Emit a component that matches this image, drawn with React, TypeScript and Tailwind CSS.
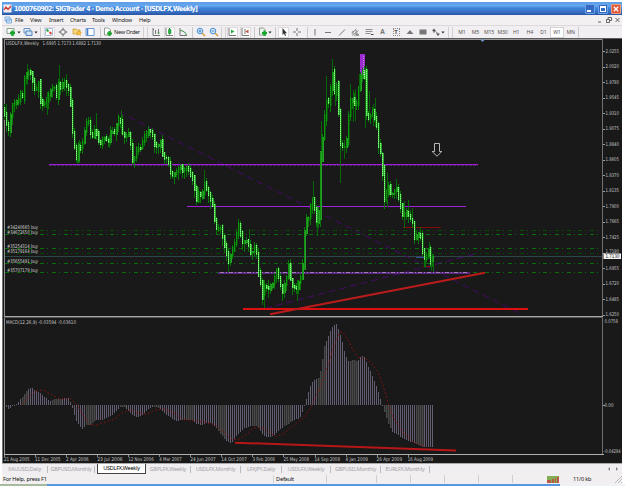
import React from "react";

type Pt = [number, number];

// Closing price path of the weekly chart, in chart pixels.
const PRICE: Pt[] = [
  [4, 108], [6.5, 121], [9, 132], [12, 107], [15, 102], [19, 100], [21.5, 92], [23, 98], [24.5, 79], [28, 71.5],
  [31.5, 73], [36, 93], [39, 80], [41.5, 105], [47, 101], [50.5, 90], [55, 86.5], [57, 98], [59.5, 80], [62, 92],
  [64, 78], [68.5, 88], [70.3, 90], [71.5, 110], [73, 131], [75, 146], [77, 160], [79.5, 143], [82, 151], [84, 135],
  [88.5, 117], [92, 139], [96, 127], [100, 146], [104, 137], [109, 141], [112, 127], [114.5, 136], [116.5, 126],
  [120, 115], [123.5, 136], [129.5, 133], [131, 143], [133.5, 163], [137.5, 147], [141.5, 148], [144, 137],
  [149.5, 129], [153.5, 135], [155.5, 146], [159.5, 146], [161.5, 139], [163.5, 157], [168, 158], [171, 172],
  [173.5, 176], [177, 171], [181, 166], [183.5, 171], [187.5, 167], [193, 177], [195, 187], [197, 201], [199, 192],
  [202, 198], [205, 182], [207, 188], [210, 197], [213, 205], [215, 218], [217, 229], [221, 227], [224, 240],
  [227, 253], [228.5, 263], [232, 252], [235, 243], [239, 224], [243, 242], [248, 240], [252, 256], [255, 245],
  [258, 257], [259.5, 278], [262, 285], [263.5, 300], [265.5, 281], [268, 290], [273, 284], [277, 269], [280, 280],
  [283, 292], [287, 277], [289, 264], [292, 285], [297, 288], [301, 278], [303, 267], [305, 233], [307, 218],
  [310, 217], [312, 197], [314, 200], [317, 222], [319, 217], [320.5, 180], [321.5, 140], [324, 137], [326.5, 92],
  [328, 112], [330.5, 93], [333, 70], [335, 93], [337, 83], [339, 110], [341, 143], [344, 148], [347, 143],
  [348.5, 120], [351, 100], [354, 98], [356, 110], [359, 90], [361.5, 73], [365, 70], [366.3, 113], [370, 118],
  [373, 110], [377, 123], [380, 155], [382.5, 150], [383.6, 187], [385.5, 202], [388.5, 183], [390.5, 193],
  [394.5, 193], [396.5, 185], [400, 200], [401.5, 208], [404, 218], [406.5, 210], [410, 217], [413.5, 222],
  [414.7, 238], [418.5, 233], [421, 235], [424, 257], [426.5, 258], [429, 248], [431.5, 264], [433.5, 256],
];

// Long shadows: x, top, bottom.
const WICKS: [number, number, number][] = [
  [6, 104, 132], [27.5, 64, 85], [47.5, 92, 115], [59.5, 65, 100], [66, 74, 96], [96, 113, 140], [121, 110, 134],
  [79, 140, 163], [109, 135, 148], [77, 150, 164], [204.5, 170, 192], [228, 255, 272], [249.5, 229, 248],
  [264.5, 285, 308], [297.5, 280, 301], [268, 280, 298], [313.5, 181, 205], [317.5, 208, 236], [321, 121, 150],
  [326.5, 76, 110], [332.5, 59, 96], [340.5, 111, 183], [344.5, 140, 159], [350.5, 84, 120], [353, 90, 122],
  [355.5, 89, 121], [359.5, 74, 103], [365.5, 68, 128], [369.5, 91, 120], [375.5, 98, 127], [387.5, 173, 207],
  [373, 104, 126], [396.5, 179, 199], [404.5, 201, 228], [408.5, 200, 220], [412.5, 208, 223], [429.5, 242, 259],
  [431.5, 254, 271], [433.5, 254, 272], [420, 227, 240], [425, 248, 268], [335.5, 78, 106],
];

const MACD: Pt[] = [
  [6, 407], [9, 409], [12.5, 406], [16, 404], [20, 400], [24, 395], [28, 389], [31.5, 387], [36, 391], [40, 392],
  [45, 397], [50, 401], [55, 398.5], [60, 399.5], [65, 398], [69, 398.5], [71, 403], [73, 410], [76, 420], [80, 426],
  [83, 429], [86, 425.5], [90, 425], [95, 420], [100, 420.5], [107, 418], [112, 415], [117, 410], [119.5, 407.5],
  [124, 407], [128, 410], [133, 415.5], [137, 417.5], [142, 415], [147, 410], [152, 407], [157, 407], [162, 410],
  [167, 415], [172, 418.5], [177, 421], [183, 419.5], [192, 419.5], [197, 424], [202, 425], [207, 422.5],
  [213, 424], [218, 430], [223, 437], [228, 442], [232, 443], [237, 435], [243, 429], [250, 426.5], [257, 426],
  [263, 435], [268, 437.5], [273, 436], [280, 429], [287, 425], [293, 420.5], [300, 418], [304, 408], [306, 400.5],
  [309, 390], [312, 382], [315, 379], [319, 378], [322, 363], [324, 347], [327, 340], [330, 332], [333, 326],
  [336.5, 324], [339, 330], [342, 340], [345, 353], [348, 361.5], [353, 360], [358, 361.5], [360, 357], [364, 356],
  [367, 363], [372, 375], [377, 387], [380, 397], [382, 403], [384, 410], [388, 423], [392, 431.5], [397, 434],
  [402, 438], [408, 441], [414, 442.5], [418, 445], [424, 447], [429, 447.5], [434, 446.5],
];

const SIGNAL: Pt[] = [
  [21.5, 404], [28, 398], [35, 391], [43, 390], [50, 394], [60, 399], [70, 398.5], [77, 405], [83, 415], [90, 425],
  [97, 425], [107, 421.5], [115, 419], [123, 412.5], [130, 410], [137, 413], [147, 414], [155, 410], [165, 409],
  [173, 412.5], [182, 419], [192, 420.5], [202, 422], [214, 424.5], [223, 431.5], [230, 438], [237, 440],
  [245, 436], [253, 428], [263, 427.5], [270, 432.5], [275, 436.5], [283, 434], [292, 427], [305, 416.5],
  [312, 405], [320, 388], [328, 365], [335, 343], [340, 332], [343, 332.5], [348, 340], [353, 350], [358, 357.5],
  [365, 358.5], [372, 363.5], [378, 372], [383, 385], [388, 403], [393, 417], [400, 428], [407, 437], [413, 441.5],
  [420, 444.5], [427, 446.5],
];

function at(points: Pt[], x: number): number {
  if (x <= points[0][0]) return points[0][1];
  for (let i = 1; i < points.length; i++) {
    if (x <= points[i][0]) {
      const [x0, y0] = points[i - 1];
      const [x1, y1] = points[i];
      return y0 + ((y1 - y0) * (x - x0)) / (x1 - x0);
    }
  }
  return points[points.length - 1][1];
}

const noise = (n: number) => {
  const v = Math.sin(n * 127.1 + 11.7) * 43758.5453;
  return v - Math.floor(v);
};

const steps = Array.from({ length: 215 }, (_, i) => 4 + i * 2);

const SCALE = [
  "2.0255", "2.0020", "1.9780", "1.9545", "1.9310", "1.9075", "1.8840", "1.8605", "1.8370",
  "1.8135", "1.7900", "1.7665", "1.7425", "1.7190", "1.6955", "1.6720", "1.6485", "1.6250",
];

const DATES = [
  "21 Aug 2005", "11 Dec 2005", "2 Apr 2006", "23 Jul 2006", "12 Nov 2006", "4 Mar 2007", "24 Jun 2007",
  "14 Oct 2007", "3 Feb 2008", "25 May 2008", "14 Sep 2008", "4 Jan 2009", "26 Apr 2009", "16 Aug 2009",
];

const ORDERS: [string, number, number, string][] = [
  ["#34240665 buy", 229, 230.5, "#054d05"],
  ["#34672650 buy", 233.5, 234.5, "#087008"],
  ["#35254314 buy", 247.7, 248.5, "#087008"],
  ["#35179164 buy", 253, 253.5, "#054205"],
  ["#35655491 buy", 263, 263.5, "#087008"],
  ["#35707179 buy", 271.7, 272.5, "#087008"],
];

function Label({ x, y, w, children, fill = "#c4c4c4" }: { x: number; y: number; w: number; children: string; fill?: string }) {
  return (
    <text x={x} y={y} textLength={w} lengthAdjust="spacingAndGlyphs" fill={fill} className="text-[5px] font-['DejaVu_Sans',sans-serif]">
      {children}
    </text>
  );
}

function Chart() {
  return (
    <svg viewBox="2 38 620 426" className="block h-[426px] w-[620px] shrink-0 bg-[#191919]">
      <g shapeRendering="crispEdges">
        <rect x="2" y="38" width="620" height="1" fill="#5c5c5c" />
        <rect x="4" y="39" width="599" height="1" fill="#969696" />
        <rect x="2" y="38" width="1" height="426" fill="#777" />
        <rect x="4" y="39" width="1" height="416" fill="#929292" />
        <rect x="602" y="39" width="1" height="416" fill="#707070" />
        <rect x="4" y="316" width="599" height="1" fill="#a8a8a8" />
        <rect x="4" y="317" width="599" height="1" fill="#555" />
        <rect x="4" y="454" width="600" height="1" fill="#b0b0b0" />
        <rect x="2" y="463" width="620" height="1" fill="#aaa" />
      </g>
      <path d="M480 39.500h5l-2.500 2.500z" fill="#6f97cc" />

      {/* open orders */}
      {ORDERS.map(([name, ty, ly, c]) => (
        <g key={name}>
          <path d={`M5 ${ly}H602`} stroke={c} strokeDasharray="4 3 1 3.700" shapeRendering="crispEdges" />
          <Label x={7} y={ty} w={31} fill="#d0d4d0">{name}</Label>
        </g>
      ))}
      <path d="M5 256.500H602" stroke="#2d4747" shapeRendering="crispEdges" />

      {/* dashed trend guides */}
      <path d="M119 112L519 313" stroke="#45086a" strokeWidth="0.900" strokeDasharray="7 4" />
      <path d="M265 308.500L475 254" stroke="#4a0970" strokeWidth="0.900" strokeDasharray="7 4" />

      {/* horizontal levels */}
      <g shapeRendering="crispEdges">
        <path d="M49 164.500H478" stroke="#a41cdb" />
        <path d="M49 165.500H478" stroke="#4c2a63" strokeDasharray="3 1" />
        <path d="M187 206.500H466" stroke="#a020dc" />
        <path d="M218 272.500H470" stroke="#5c2882" strokeWidth="2" />
        <path d="M220 272.500H469" stroke="#9a80ae" strokeDasharray="4 2 1 2" />
        <path d="M403 227.500H441" stroke="#850b0b" />
        <path d="M416 257.500H424" stroke="#324f91" />
        <path d="M423 266.500H430" stroke="#850b0b" />
        <rect x="360" y="54" width="5" height="24" fill="#9b2bd0" />
      </g>

      {/* candles */}
      <g shapeRendering="crispEdges">
        {WICKS.map(([x, a, b], i) => (
          <rect key={i} x={Math.floor(x)} y={a} width="1" height={b - a} fill="#056805" />
        ))}
        {steps.map((x, i) => {
          const open = at(PRICE, x - 1);
          const close = at(PRICE, x + 1.2);
          const top = Math.round(Math.min(open, close) - noise(i) * 2);
          const bottom = Math.round(Math.max(open, close) + 1 + noise(i + 300) * 2);
          const bear = close > open + 0.4;
          const wide = noise(i + 700) > 0.6;
          return (
            <g key={x}>
              <rect x={x} y={top - Math.round(noise(i + 50) * 4)} width="1" height={bottom - top + Math.round(3 + noise(i + 90) * 5)} fill="#067606" />
              <rect x={x + 1} y={top} width="1" height={bottom - top} fill={wide ? "#2a9c2a" : bear ? "#0c560c" : "#075007"} />
              <rect x={x} y={top} width="1" height={bottom - top} fill={bear ? "#48d848" : "#088a08"} />
              <path
                d={`M${x + 0.5} ${top}V${bottom}`}
                stroke={bear ? "#8cff8c" : "#12a012"}
                strokeDasharray="1 1"
              />
            </g>
          );
        })}
        <path d="M363.500 56V76" stroke="#bd88d8" strokeDasharray="1 1" />
      </g>

      {/* MACD histogram and signal */}
      <g shapeRendering="crispEdges">
        {steps.slice(1).map((x) => {
          const v = Math.round(at(MACD, x + 0.5));
          const y = Math.min(v, 405);
          const gray =
            (x > 20 && x < 28) || (x > 51 && x < 62) || (x > 85 && x < 95) || (x > 118 && x < 126) ||
            (x > 152 && x < 160) || (x > 184 && x < 194) || (x > 216 && x < 226) || (x > 250 && x < 260) ||
            (x > 283 && x < 292) || (x > 317 && x < 325) || (x > 349 && x < 358) || (x > 383 && x < 391) ||
            (x > 415 && x < 424);
          return (
            <g key={x}>
              <rect x={x} y={y} width="1" height={Math.max(1, Math.abs(v - 405))} fill={gray ? "#484848" : "#645c70"} />
              {gray && <rect x={x + 1} y={y} width="1" height={Math.max(1, Math.abs(v - 405))} fill="#303030" />}
            </g>
          );
        })}
      </g>
      <polyline points={SIGNAL.map((p) => p.join(",")).join(" ")} fill="none" stroke="#a30d0d" strokeWidth="0.900" strokeDasharray="1.500 2.500" />

      {/* drawn trend lines */}
      <path d="M243 309H528" stroke="#dc1010" strokeWidth="2" shapeRendering="crispEdges" />
      <path d="M270 314.300L485 272.700" stroke="#bb1b1b" strokeWidth="2" />
      <path d="M235 442.700L456 450.500" stroke="#b81717" strokeWidth="2" />
      <path d="M434.500 143.500h5v8h2.300l-4.800 4.700-4.800-4.700h2.300z" fill="none" stroke="#c9c9c9" strokeWidth="0.900" />

      {/* captions and scales */}
      <Label x={6} y={45.300} w={33}>USDLFX,Weekly</Label>
      <Label x={42.500} y={45.300} w={58.500}>1.6995 1.7173 1.6882 1.7130</Label>
      <Label x={6} y={324} w={70}>MACD(12,26,9) -0.03594 -0.03610</Label>
      {SCALE.map((s, i) => {
        const y = 51 + i * 15.5;
        return (
          <g key={s}>
            <rect x="603" y={Math.round(y)} width="2" height="1" fill="#999" />
            <Label x={605.5} y={s === "1.7190" ? 252.6 : y + 1.8} w={13.500}>{s}</Label>
          </g>
        );
      })}
      <Label x={604.500} y={322.500} w={13.500}>0.0758</Label>
      <rect x="603" y="405" width="2" height="1" fill="#999" />
      <Label x={604.500} y={407} w={9}>0.00</Label>
      <Label x={604} y={453} w={16.500}>-0.04294</Label>
      <rect x="603.500" y="253.500" width="17.500" height="5.500" fill="#f4f4f4" />
      <Label x={605.500} y={258.300} w={14} fill="#222">1.7130</Label>
      {DATES.map((d, i) => (
        <g key={d}>
          <rect x={Math.round(4 + i * 31.05)} y="455" width="1" height="2" fill="#888" />
          <Label x={4 + i * 31.05} y={461} w={d.length > 10 ? 25.500 : 22.500}>{d}</Label>
        </g>
      ))}
    </svg>
  );
}

function Cell({ w, boxed, children }: { w: string; boxed?: boolean; children?: React.ReactNode }) {
  return (
    <div className={`flex h-full shrink-0 items-center justify-center ${w}`}>
      <div className={boxed ? "flex h-[11px] w-[11px] items-center justify-center border border-[#dcdadc] bg-white" : "flex items-center justify-center"}>
        {children}
      </div>
    </div>
  );
}

function Icon({ children }: { children: React.ReactNode }) {
  return (
    <svg viewBox="0 0 10 10" className="block h-[10px] w-[10px] shrink-0" fill="none" stroke="#777" strokeWidth="1">
      {children}
    </svg>
  );
}

const Caret = ({ w }: { w: string }) => (
  <Cell w={w}>
    <svg viewBox="0 0 4 3" className="block h-[3px] w-[4px]"><path d="M0.300 0.500h3.400L2 2.500z" fill="#333" /></svg>
  </Cell>
);

const Sep = ({ w }: { w: string }) => (
  <div className={`flex h-full shrink-0 items-center justify-center ${w}`}>
    <div className="h-[11px] w-px bg-[#cbc8ca]" />
  </div>
);

const DoubleSep = ({ w }: { w: string }) => (
  <div className={`flex h-full shrink-0 items-center justify-center gap-[3px] ${w}`}>
    <div className="h-[11px] w-px bg-[#d3d0d2]" />
    <div className="h-[11px] w-px bg-[#d3d0d2]" />
  </div>
);

function Toolbar() {
  return (
    <div className="flex h-[13px] items-center border-t border-[#dcd8dc] bg-[#f1eff1] pl-[3px]">
      <Cell w="w-[12px]"><Icon><path d="M1 1.500h7v5H1z" fill="#f7fbf7" stroke="#8aa58f" /><path d="M4 6h5M6.500 3.500v5.500" stroke="#17a52b" strokeWidth="2.400" /></Icon></Cell>
      <Caret w="w-[4px]" />
      <Cell w="w-[13px]"><Icon><path d="M1 1.500h6v4.500H1z" fill="#e2edf9" stroke="#6b94c5" /><path d="M3 4h6v4.500H3z" fill="#cfe2f7" stroke="#5384bd" /></Icon></Cell>
      <Caret w="w-[4px]" />
      <Sep w="w-[5px]" />
      <Cell w="w-[12px]" boxed><Icon><path d="M1.500 1.500h7v7h-7z" fill="#fff" stroke="#a9bfdd" /><path d="M2.500 2.500l2 2" stroke="#26a43a" strokeWidth="1.800" /><path d="M5.500 5l2 2" stroke="#da4539" strokeWidth="1.800" /></Icon></Cell>
      <Cell w="w-[15px]"><Icon><circle cx="5" cy="5" r="2.500" /><path d="M5 .5v3M5 6.500v3M.5 5h3M6.500 5h3" /></Icon></Cell>
      <Cell w="w-[13px]"><Icon><path d="M1 2h3l1 1h3v4H1z" fill="#f6d87e" stroke="#cf9d35" strokeWidth=".8" /><path d="M7 3.500l.8 1.500 1.700.3-1.200 1.200.3 1.800L7 7.500l-1.600.8.3-1.800L4.500 5.300l1.700-.3z" fill="#fbc638" stroke="#d69525" strokeWidth=".5" /></Icon></Cell>
      <Cell w="w-[14px]"><Icon><path d="M1 1.500h8v7H1z" fill="#fff" stroke="#6b9bd6" /><path d="M2.500 2v6" stroke="#4b80c6" strokeWidth="1.600" /></Icon></Cell>
      <Sep w="w-[6px]" />
      <Cell w="w-[10px]"><Icon><path d="M1.500 1h4l2 2v5h-6z" fill="#fff" stroke="#7c8a80" strokeWidth=".8" /><path d="M4 6.500h5M6.500 4v5" stroke="#1ba62d" strokeWidth="2.200" /></Icon></Cell>
      <div className="w-[28px] shrink-0 whitespace-nowrap pl-px text-[5.500px] leading-[11px] tracking-[-0.250px]">New Order</div>
      <DoubleSep w="w-[8px]" />
      <Cell w="w-[14px]"><Icon><path d="M2 1v7.500h7M4.500 3v4M7.500 2v5M2 2.500h1" /><path d="M6.500 6h2" stroke="#2d993c" /></Icon></Cell>
      <Cell w="w-[12px]" boxed><Icon><path d="M2 1v7.500h7" /><path d="M5.500 1v6.500" stroke="#1c8c2e" /><path d="M4.500 2.500h2.500v4H4.500z" fill="#31b548" stroke="#198a2b" strokeWidth=".6" /></Icon></Cell>
      <Cell w="w-[15px]"><Icon><path d="M2 1v7.500h7" /><path d="M2 3.500l3 .5 3 2.500v2" stroke="#369745" /></Icon></Cell>
      <Sep w="w-[4px]" />
      <Cell w="w-[13px]"><Icon><circle cx="4" cy="4" r="2.800" fill="#d5e9fb" stroke="#478fd5" /><path d="M6.200 6.200L9 9" stroke="#d79c34" strokeWidth="1.500" /><path d="M2.600 4h2.800M4 2.600v2.800" stroke="#2d75bd" strokeWidth=".8" /></Icon></Cell>
      <Cell w="w-[13px]"><Icon><circle cx="4" cy="4" r="2.800" fill="#d5e9fb" stroke="#478fd5" /><path d="M6.200 6.200L9 9" stroke="#d79c34" strokeWidth="1.500" /><path d="M2.600 4h2.800" stroke="#2d75bd" strokeWidth=".8" /></Icon></Cell>
      <DoubleSep w="w-[6px]" />
      <Cell w="w-[12px]" boxed><Icon><path d="M2 1v7.500h7" /><path d="M4 2.500v4L7.500 4.500z" fill="#2aac41" stroke="none" /></Icon></Cell>
      <Cell w="w-[14px]" boxed><Icon><path d="M2 1v7.500h7M5 2v5" /><path d="M8.500 2.500v4L5.500 4.500z" fill="#bd5244" stroke="none" /></Icon></Cell>
      <Sep w="w-[5px]" />
      <Cell w="w-[11px]"><Icon><path d="M1.500 1h4l1.500 1.500V8H1.500z" fill="#edf2ed" stroke="#7b8c7d" strokeWidth=".8" /><path d="M6.500 3.500v5.500M4 6.200h5" stroke="#14a828" strokeWidth="2.300" /></Icon></Cell>
      <Caret w="w-[4px]" />
      <Sep w="w-[6px]" />
      <Cell w="w-[11px]" boxed><Icon><path d="M3.500 1v7l1.500-1.500L6 9l1-.5-1-2.300h2z" fill="#333" stroke="none" /></Icon></Cell>
      <Cell w="w-[16px]"><Icon><path d="M5 1v3M5 6v3M1 5h3M6 5h3" /></Icon></Cell>
      <Sep w="w-[4px]" />
      <Cell w="w-[12px]"><Icon><path d="M5 2v6.500" /></Icon></Cell>
      <Cell w="w-[14px]"><Icon><path d="M2 5.500h6" /></Icon></Cell>
      <Cell w="w-[13px]"><Icon><path d="M2 8.500l6-6" /></Icon></Cell>
      <Cell w="w-[14px]"><Icon><path d="M1.500 6l5-4M2 8.500l6.500-5M4 9l4-3M3 4v3M6 3v4" strokeWidth=".8" /><path d="M6 8h3" stroke="#444" /></Icon></Cell>
      <Cell w="w-[14px]"><Icon><path d="M1.500 2.500h7M1.500 4.500h7M1.500 6.500h5" strokeWidth=".8" /><path d="M7 7.500h2.500" stroke="#444" /></Icon></Cell>
      <Cell w="w-[13px]"><span className="text-[6.500px] font-bold leading-[10px] text-[#777]">A</span></Cell>
      <Cell w="w-[14px]"><span className="h-[8px] w-[7px] border border-dotted border-[#888] text-center text-[6px] font-bold leading-[6px] text-[#555]">T</span></Cell>
      <Cell w="w-[13px]"><Icon><path d="M1.500 7l3.500-4 3.500 4z" fill="#777" stroke="none" /></Icon></Cell>
      <Cell w="w-[14px]"><Icon><path d="M1.500 2.500h7v5h-7z" fill="#777" stroke="none" /></Icon></Cell>
      <Cell w="w-[11px]"><Icon><path d="M3 1.500L1 4h1.300v1.500h1.400V4H5zM7 9L5 6.500h4z" fill="#555" stroke="none" /><path d="M4.500 4.500L7 6.500" /></Icon></Cell>
      <Caret w="w-[4px]" />
      <DoubleSep w="w-[10px]" />
      {["M1", "M5", "M15", "M30", "H1", "H4", "D1", "W1", "MN"].map((t) => (
        <div key={t} className={`flex h-[11px] w-[13.600px] shrink-0 items-center justify-center ${t === "W1" ? "border border-[#d5d2d5] bg-white" : ""}`}>
          <span className="text-[5.200px] leading-[10px] tracking-[-0.200px] text-[#555]">{t}</span>
        </div>
      ))}
      <Sep w="w-[3px]" />
    </div>
  );
}

function TitleBar() {
  return (
    <div className="flex h-[13px] items-center bg-[linear-gradient(180deg,#5f9de6_0px,#66a7ee_4px,#3e83d8_6px,#3871c6_10px,#2852a0_13px)] pl-px">
      <svg viewBox="0 0 9 9" className="block h-[9px] w-[9px] shrink-0">
        <rect x=".5" y=".5" width="8" height="8" fill="#f5eeee" />
        <path d="M1 6l2-3 2 2.500L8 2" fill="none" stroke="#cf3838" strokeWidth="1.300" />
      </svg>
      <span className="ml-[2px] w-[187px] shrink-0 whitespace-nowrap font-['DejaVu_Sans_Condensed','DejaVu_Sans',sans-serif] text-[6.900px] font-bold leading-[12px] tracking-[-0.540px] text-white">
        1000760902: SIGTrader 4 - Demo Account - [USDLFX,Weekly]
      </span>
      <div className="ml-auto flex gap-[3px] pr-px">
        <div className="flex h-[10px] w-[10px] items-end rounded-[1px] border border-[#6ba5e8] bg-[#3569c4] p-px"><div className="h-[2px] w-[4px] bg-white" /></div>
        <div className="flex h-[10px] w-[10px] items-center justify-center rounded-[1px] border border-[#6ba5e8] bg-[#3569c4]"><div className="h-[6px] w-[6px] border border-t-2 border-white" /></div>
        <div className="flex h-[10px] w-[10px] items-center justify-center rounded-[1px] border border-[#ee9d7f] bg-[#dd5938]">
          <svg viewBox="0 0 6 6" className="block h-[6px] w-[6px]"><path d="M.8.8l4.400 4.400M5.200.8L.8 5.200" stroke="#fff" strokeWidth="1.300" /></svg>
        </div>
      </div>
    </div>
  );
}

function MenuBar() {
  return (
    <div className="flex h-[10px] items-center bg-[#f2f0f1] pl-[2px] text-[5.600px] leading-[9px] tracking-[-0.200px] text-[#222]">
      <svg viewBox="0 0 8 8" className="mr-[3px] block h-[8px] w-[8px] shrink-0">
        <path d="M1 1h5v4H1zM2.500 3h5v4h-5z" fill="#dcecfb" stroke="#6a9fda" strokeWidth=".8" />
      </svg>
      <span className="w-[15px] shrink-0">File</span>
      <span className="w-[19px] shrink-0">View</span>
      <span className="w-[21px] shrink-0">Insert</span>
      <span className="w-[22px] shrink-0">Charts</span>
      <span className="w-[20px] shrink-0">Tools</span>
      <span className="w-[27px] shrink-0">Window</span>
      <span className="w-[12px] shrink-0">Help</span>
      <svg viewBox="0 0 24 8" className="ml-auto mr-px block h-[8px] w-[24px]" fill="none" stroke="#555">
        <path d="M1 6h3M9.500 3.500h3v3h-3zM11 3V1.500h3.500v3H13M18.500 2l4 4M22.500 2l-4 4" strokeWidth=".9" />
      </svg>
    </div>
  );
}

function Tab({ w, children }: { w: string; children: string }) {
  return (
    <div className={`flex h-full shrink-0 items-center justify-center ${w}`}>
      <span className="flex-1 whitespace-nowrap text-center">{children}</span>
      <span className="h-[7px] w-px bg-[#bbb]" />
    </div>
  );
}

function Tabs() {
  return (
    <div className="flex h-[10px] bg-[#f0eef0] text-[5.500px] leading-[9px] tracking-[-0.240px] text-[#a5a2a5]">
      <Tab w="w-[46px]">XAUUSD,Daily</Tab>
      <Tab w="w-[47px]">GBPUSD,Monthly</Tab>
      <div className="ml-[2px] h-[10px] w-[49px] shrink-0 whitespace-nowrap border border-t-0 border-[#444] bg-white text-center text-black">USDLFX,Weekly</div>
      <Tab w="w-[45px]">GBPLFX,Weekly</Tab>
      <Tab w="w-[50px]">USDLFX,Monthly</Tab>
      <Tab w="w-[41px]">LFXJPY,Daily</Tab>
      <Tab w="w-[49px]">USDLFX,Weekly</Tab>
      <Tab w="w-[50px]">GBPUSD,Monthly</Tab>
      <Tab w="w-[49px]">EURLFX,Monthly</Tab>
      <svg viewBox="0 0 14 8" className="ml-auto mr-[2px] mt-px block h-[8px] w-[14px]">
        <path d="M4 2v4L2 4zM10 2v4l2-2z" fill="#888" />
      </svg>
    </div>
  );
}

function StatusBar() {
  return (
    <div className="flex h-[10px] items-center bg-[#f1eff0] text-[5.600px] leading-[10px] tracking-[-0.180px] text-[#111]">
      <span className="w-[271px] shrink-0 whitespace-nowrap pl-px">For Help, press F1</span>
      <span className="h-[8px] w-[53px] shrink-0 border-l border-[#d2cfd1] pl-[2px] leading-[8px]">Default</span>
      <span className="h-[8px] w-[50px] shrink-0 border-l border-[#d2cfd1]" />
      <span className="h-[8px] w-[34px] shrink-0 border-l border-[#d2cfd1]" />
      <span className="h-[8px] w-[34px] shrink-0 border-l border-[#d2cfd1]" />
      <span className="h-[8px] w-[34px] shrink-0 border-l border-[#d2cfd1]" />
      <span className="h-[8px] w-[34px] shrink-0 border-l border-[#d2cfd1]" />
      <span className="h-[8px] w-[35px] shrink-0 border-l border-[#d2cfd1]" />
      <svg viewBox="0 0 12 7" className="block h-[7px] w-[12px] shrink-0">
        <rect width="12" height="7" fill="#84ad55" />
        <path d="M0 4h4v3H0zM5 3h2v4H5zM8 2h1v5H8zM10 1h2v6h-2z" fill="#b75744" />
      </svg>
      <span className="ml-[14px] whitespace-nowrap">11/0 kb</span>
      <svg viewBox="0 0 8 8" className="ml-auto block h-[8px] w-[8px]"><path d="M1 8l7-7M4 8l4-4M7 8l1-1" stroke="#bbb" /></svg>
    </div>
  );
}

export default function App() {
  return (
    <div className="flex h-[486px] w-[625px] flex-col overflow-hidden bg-white font-['Noto_Sans','Open_Sans',sans-serif] text-[#222]">
      <div className="flex h-[484px] w-[622px] flex-col pl-[2px] pt-[2px]">
        <TitleBar />
        <MenuBar />
        <Toolbar />
        <Chart />
        <Tabs />
        <StatusBar />
      </div>
      <div className="flex h-[2px]">
        <div className="w-[47px] bg-[#a7b99f]" />
        <div className="w-[513px] bg-[#5796e1]" />
        <div className="flex-1 bg-[#eef1f5]" />
      </div>
    </div>
  );
}
